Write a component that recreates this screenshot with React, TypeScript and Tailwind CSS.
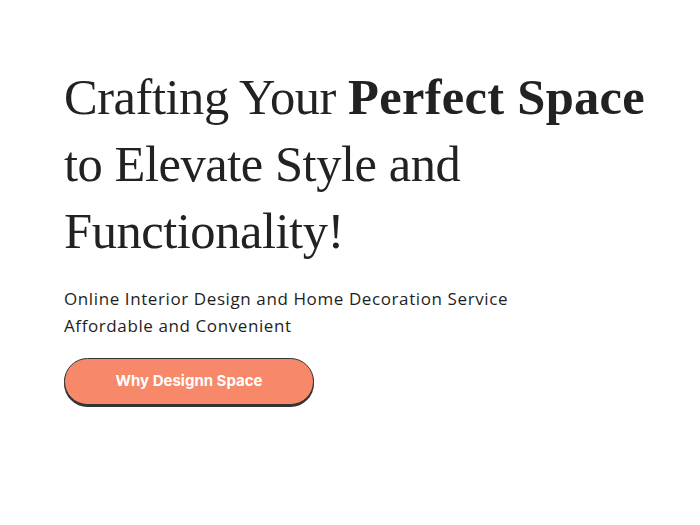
export default function App() {
  return (
    <div className="w-[700px] h-[525px] bg-white flex flex-col pl-[64px] pt-[64px]">
      <h1 className="font-['Liberation_Serif',serif] text-[50.5px] leading-[67px] tracking-[-0.45px] text-[#222222]">
        Crafting Your <span className="font-bold tracking-[0.3px]">Perfect Space</span>
        <br />
        to Elevate Style and
        <br />
        Functionality!
      </h1>
      <p className="mt-[20px] font-['Open_Sans',sans-serif] text-[17px] leading-[27px] tracking-[0.6px] text-[#1e1e1e]">
        Online Interior Design and Home Decoration Service
        <br />
        Affordable and Convenient
      </p>
      <button className="mt-[19px] w-[250px] h-[47px] rounded-full bg-[#f8886a] border border-[#333] shadow-[0_2px_0_#333] text-white font-bold text-[15px] font-['Inter',sans-serif]">
        Why Designn Space
      </button>
    </div>
  );
}
